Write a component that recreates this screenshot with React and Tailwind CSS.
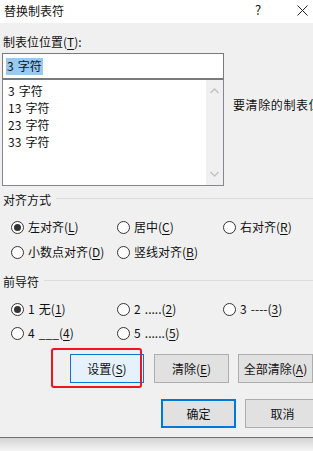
import React from "react";

const U = ({ children }) => (
  <span className="underline underline-offset-[2px] decoration-[1px]">{children}</span>
);

function Radio({ checked, children, className = "" }) {
  return (
    <div className={`flex items-center h-[16px] ${className}`}>
      <span className="w-[13px] h-[13px] rounded-full border border-[#333333] bg-white flex items-center justify-center shrink-0">
        {checked && <span className="w-[7px] h-[7px] rounded-full bg-[#333333]" />}
      </span>
      <span className="ml-[4px] whitespace-nowrap">{children}</span>
    </div>
  );
}

function Group({ title, className = "" }) {
  return (
    <div className={`flex items-center h-[16px] pl-[3px] ${className}`}>
      <span className="whitespace-nowrap">{title}</span>
      <div className="flex-1 ml-[5px] h-px bg-[#dcdcdc] -mt-[3px]" />
    </div>
  );
}

function Btn({ children, className = "" }) {
  return (
    <div
      className={`h-[29px] shrink-0 flex items-center justify-center whitespace-nowrap ${className}`}
    >
      {children}
    </div>
  );
}

export default function App() {
  return (
    <div className="w-[313px] h-[451px] overflow-hidden bg-[#f3f3f3] text-[12px] leading-[16px] text-[#111] [word-spacing:1.5px] font-['Noto_Sans_CJK_SC','Microsoft_YaHei',sans-serif] relative">
      <div className="h-[438px] flex flex-col border-b border-[#6f6f6f]">
        {/* Title bar */}
        <div className="h-[23px] bg-white flex items-center shrink-0 relative">
          <span className="ml-[4px] -mt-[2px]">替换制表符</span>
          <span className="absolute left-[255px] top-[2px] text-[13px]">?</span>
          <svg
            className="absolute left-[297px] top-[5px]"
            width="11"
            height="11"
            viewBox="0 0 11 11"
          >
            <path d="M0.5 0.5 L10.5 10.5 M10.5 0.5 L0.5 10.5" stroke="#222" strokeWidth="1" />
          </svg>
        </div>

        {/* Body */}
        <div className="flex-1 bg-[#f0f0f0] pt-[11px]">
          <div className="pl-[3px]">
            制表位位置(<U>T</U>):
          </div>

          <div className="flex mt-[3px]">
            <div className="ml-[2px] w-[222px] shrink-0">
              {/* input */}
              <div className="h-[26px] border border-[#7a7a7a] bg-white flex items-center pl-[3px]">
                <span className="bg-[#99c9ef] px-[1px] h-[17px] flex items-center">3 字符</span>
              </div>
              {/* list */}
              <div className="h-[107px] border border-[#828790] border-t-[#7a7a7a] bg-white flex">
                <div className="flex-1 pt-[2px] pl-[5px]">
                  <div className="h-[17px] flex items-center">3 字符</div>
                  <div className="h-[17px] flex items-center">13 字符</div>
                  <div className="h-[17px] flex items-center">23 字符</div>
                  <div className="h-[17px] flex items-center">33 字符</div>
                </div>
                <div className="w-[17px] bg-[#f0f0f0] flex flex-col items-center justify-between py-[8px]">
                  <svg width="9" height="6" viewBox="0 0 9 6">
                    <path d="M0.5 5 L4.5 1 L8.5 5" stroke="#c2c2c2" strokeWidth="1.5" fill="none" />
                  </svg>
                  <svg width="9" height="6" viewBox="0 0 9 6">
                    <path d="M0.5 1 L4.5 5 L8.5 1" stroke="#c2c2c2" strokeWidth="1.5" fill="none" />
                  </svg>
                </div>
              </div>
            </div>
            <div className="ml-[9px] mt-[44px] whitespace-nowrap tracking-[0.6px]">要清除的制表位</div>
          </div>

          <Group title="对齐方式" className="mt-[6px]" />
          <div className="flex pl-[11px] mt-[11px]">
            <Radio checked className="w-[106px]">
              左对齐(<U>L</U>)
            </Radio>
            <Radio className="w-[106px]">
              居中(<U>C</U>)
            </Radio>
            <Radio>
              右对齐(<U>R</U>)
            </Radio>
          </div>
          <div className="flex pl-[11px] mt-[9px]">
            <Radio className="w-[106px]">
              小数点对齐(<U>D</U>)
            </Radio>
            <Radio>
              竖线对齐(<U>B</U>)
            </Radio>
          </div>

          <Group title="前导符" className="mt-[14px]" />
          <div className="flex pl-[11px] mt-[11px]">
            <Radio checked className="w-[106px]">
              1 无(<U>1</U>)
            </Radio>
            <Radio className="w-[106px]">
              2 .....(<U>2</U>)
            </Radio>
            <Radio>
              3 ----(<U>3</U>)
            </Radio>
          </div>
          <div className="flex pl-[11px] mt-[8px]">
            <Radio className="w-[106px]">
              4 ___(<U>4</U>)
            </Radio>
            <Radio>
              5 ......(<U>5</U>)
            </Radio>
          </div>

          <div className="flex mt-[13px] pl-[70px]">
            <Btn className="w-[74px] bg-[#e5f1fb] border border-[#0078d7]">
              设置(<U>S</U>)
            </Btn>
            <Btn className="w-[75px] ml-[10px] bg-[#e1e1e1] border border-[#adadad]">
              清除(<U>E</U>)
            </Btn>
            <Btn className="w-[75px] ml-[9px] bg-[#e1e1e1] border border-[#adadad]">
              全部清除(<U>A</U>)
            </Btn>
          </div>
          <div className="flex mt-[16px] pl-[161px]">
            <Btn className="w-[75px] bg-[#e1e1e1] border-2 border-[#0078d7]">确定</Btn>
            <Btn className="w-[75px] ml-[9px] bg-[#e1e1e1] border border-[#adadad]">取消</Btn>
          </div>
        </div>
      </div>
      <div className="h-[13px] bg-gradient-to-b from-[#d4d4d4] to-[#f5f5f5]" />

      {/* red annotation rectangle */}
      <div className="absolute left-[51px] top-[348px] w-[91px] h-[40px] border-2 border-[#f0141e] rounded-[3px] pointer-events-none" />
    </div>
  );
}
